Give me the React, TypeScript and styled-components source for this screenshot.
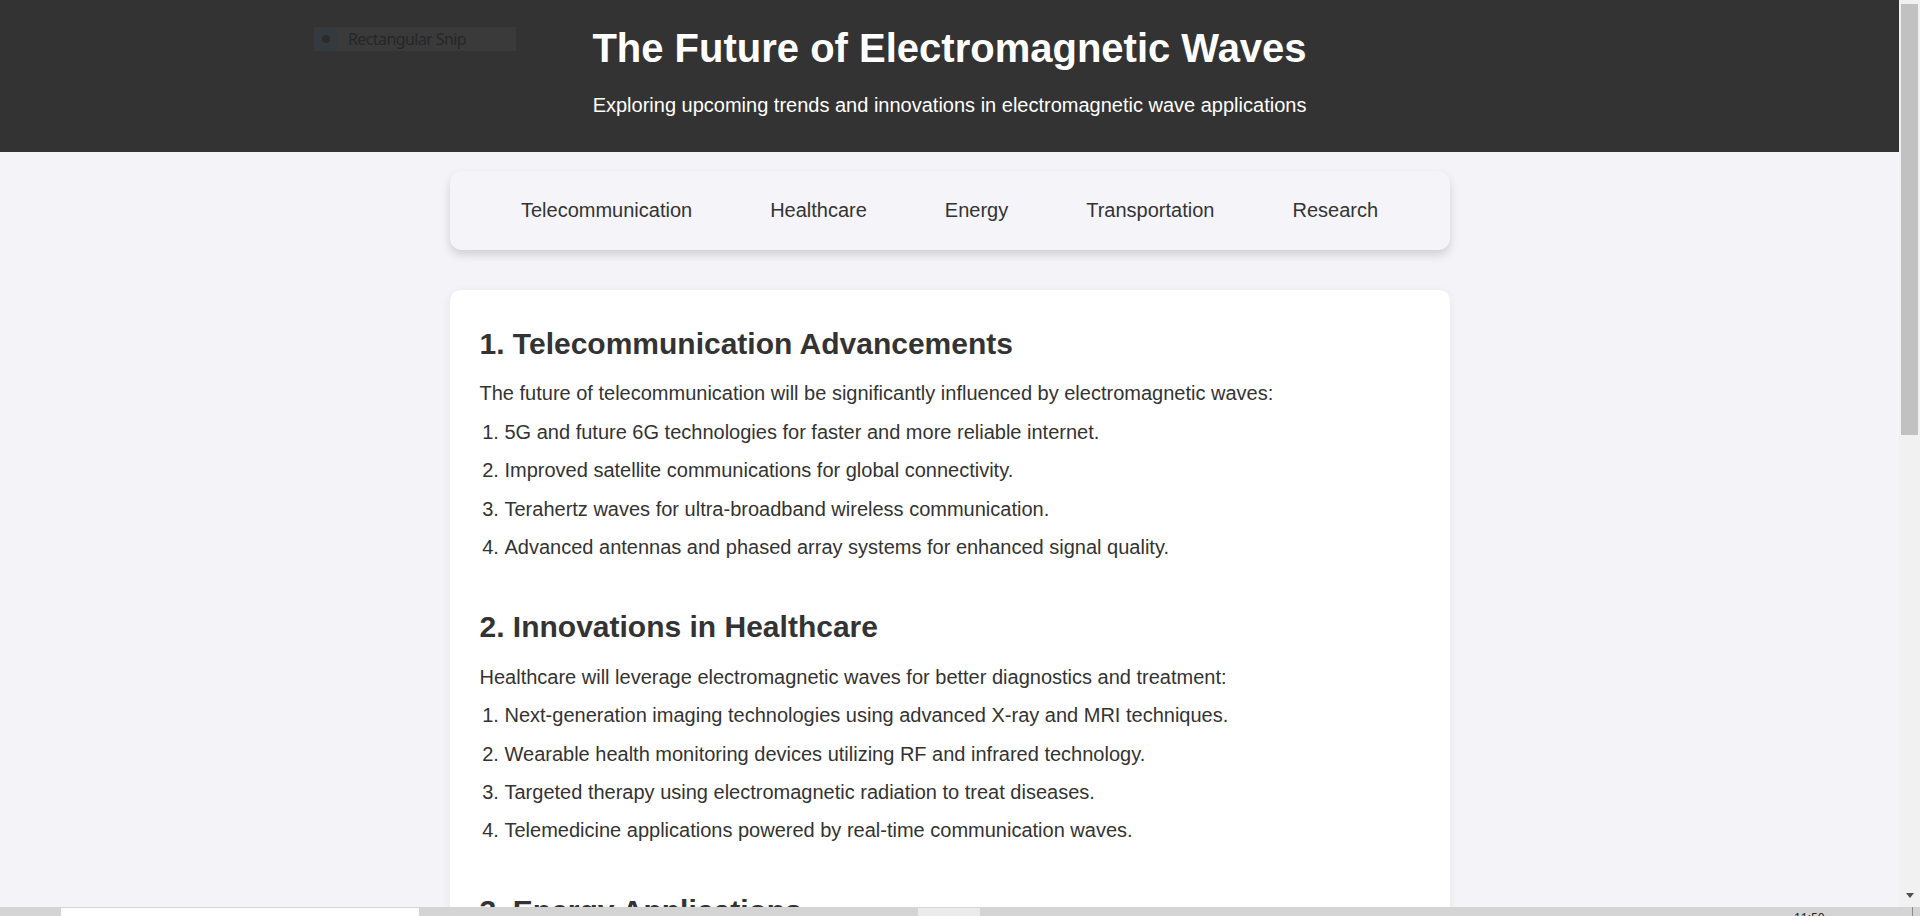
import React from "react";
import styled, { createGlobalStyle } from "styled-components";

const GlobalStyle = createGlobalStyle`
  html, body {
    margin: 0;
    padding: 0;
  }
  body {
    font-family: "Liberation Sans", Arial, sans-serif;
    background: #f3f3f8;
    overflow: hidden;
  }
`;

const Frame = styled.div`
  width: 1920px;
  height: 916px;
  display: flex;
  flex-direction: column;
  overflow: hidden;
`;

const Screen = styled.div`
  display: flex;
  height: 907px;
  flex: none;
`;

const Viewport = styled.div`
  flex: 1;
  min-width: 0;
  overflow: hidden;
  position: relative;
  background: #f3f3f8;
  color: #333;
  line-height: 1.6;
`;

const Scrollbar = styled.div`
  width: 21px;
  flex: none;
  background: #f1f1f1;
  display: flex;
  flex-direction: column;
  align-items: center;
  padding-top: 4px;
  box-sizing: border-box;
`;

const Thumb = styled.div`
  width: 17px;
  height: 431px;
  background: #c1c1c1;
`;

const ScrollArrow = styled.div`
  margin-top: auto;
  margin-bottom: 9px;
  width: 0;
  height: 0;
  border-left: 4.5px solid transparent;
  border-right: 4.5px solid transparent;
  border-top: 5px solid #505050;
`;

const Header = styled.header`
  background: #333;
  color: #fff;
  text-align: center;
  padding: 25px 20px 34.7px;
`;

const Title = styled.h1`
  margin: 0;
  font-size: 40px;
  line-height: 46px;
  font-weight: 700;
`;

const Subtitle = styled.p`
  margin: 23.3px 0 0;
  font-size: 20px;
  line-height: 23px;
`;

const Nav = styled.nav`
  max-width: 1000px;
  margin: 19px auto 40px;
  background: #f5f5f9;
  border-radius: 12px;
  box-shadow: 0 5px 10px rgba(0, 0, 0, 0.14);
  display: flex;
  justify-content: center;
  gap: 78px;
  padding: 23.5px 0;
`;

const NavLink = styled.a`
  font-size: 20px;
  line-height: 32px;
  color: #333;
  text-decoration: none;
`;

const Card = styled.main`
  max-width: 1000px;
  margin: 0 auto;
  background: #fff;
  border-radius: 10px;
  padding: 30px;
  box-sizing: border-box;
  box-shadow: 0 2px 10px rgba(0, 0, 0, 0.06);
`;

const Section = styled.section`
  margin-bottom: 40.5px;
`;

const SectionTitle = styled.h2`
  margin: 0 0 9.5px;
  font-size: 30px;
  line-height: 48px;
  font-weight: 700;
  color: #333;
`;

const Para = styled.p`
  margin: 0 0 6.3px;
  font-size: 20px;
  line-height: 32px;
`;

const List = styled.ol`
  margin: 0;
  padding-left: 25px;
`;

const Item = styled.li`
  font-size: 20px;
  line-height: 32px;
  margin-bottom: 6.4px;
`;

const Snip = styled.div`
  position: absolute;
  left: 314px;
  top: 27px;
  width: 202px;
  height: 24px;
  background: #3a3a3b;
  display: flex;
  align-items: center;
`;

const SnipIcon = styled.div`
  width: 24px;
  height: 24px;
  background: #353a3e;
  display: flex;
  align-items: center;
  justify-content: center;
`;

const SnipDot = styled.div`
  width: 8px;
  height: 8px;
  border-radius: 50%;
  background: #2b2b2b;
`;

const SnipLabel = styled.span`
  margin-left: 10px;
  font-family: "Noto Sans", "Open Sans", sans-serif;
  font-size: 16px;
  letter-spacing: -0.6px;
  line-height: 24px;
  color: #262626;
`;

const Taskbar = styled.div`
  height: 9px;
  flex: none;
  background: #d4d4d4;
  display: flex;
  align-items: flex-start;
  overflow: hidden;
`;

const TaskSlot = styled.div<{ $offset: number; $width: number; $tone: string }>`
  margin-left: ${(p) => p.$offset}px;
  width: ${(p) => p.$width}px;
  height: 9px;
  margin-top: 1px;
  background: ${(p) => p.$tone};
`;

const Clock = styled.span`
  margin-left: 814px;
  font-family: "Noto Sans", sans-serif;
  font-size: 12px;
  line-height: 12px;
  padding-top: 5px;
  color: #222;
`;

const TaskLine = styled.div`
  margin-left: auto;
  margin-right: 7px;
  width: 1px;
  height: 9px;
  background: #8a8a8a;
`;

type SectionData = {
  title: string;
  intro: string;
  items: string[];
};

const sections: SectionData[] = [
  {
    title: "1. Telecommunication Advancements",
    intro:
      "The future of telecommunication will be significantly influenced by electromagnetic waves:",
    items: [
      "5G and future 6G technologies for faster and more reliable internet.",
      "Improved satellite communications for global connectivity.",
      "Terahertz waves for ultra-broadband wireless communication.",
      "Advanced antennas and phased array systems for enhanced signal quality.",
    ],
  },
  {
    title: "2. Innovations in Healthcare",
    intro:
      "Healthcare will leverage electromagnetic waves for better diagnostics and treatment:",
    items: [
      "Next-generation imaging technologies using advanced X-ray and MRI techniques.",
      "Wearable health monitoring devices utilizing RF and infrared technology.",
      "Targeted therapy using electromagnetic radiation to treat diseases.",
      "Telemedicine applications powered by real-time communication waves.",
    ],
  },
  {
    title: "3. Energy Applications",
    intro:
      "Electromagnetic waves will play a key role in how energy is produced and delivered:",
    items: [
      "Wireless power transfer for electric vehicles and consumer devices.",
      "Space-based solar power beamed to Earth using microwaves.",
      "Smart grids relying on wireless sensing and communication.",
      "Improved photovoltaic materials harvesting a wider light spectrum.",
    ],
  },
  {
    title: "4. Transportation",
    intro: "Transportation systems will become safer and smarter:",
    items: [
      "Radar and LiDAR for autonomous vehicles.",
      "Vehicle-to-everything (V2X) communication networks.",
      "Satellite navigation with centimeter-level precision.",
      "Wireless charging lanes for electric roads.",
    ],
  },
  {
    title: "5. Research Frontiers",
    intro: "Ongoing research continues to open new possibilities:",
    items: [
      "Metamaterials for controlling wave propagation.",
      "Quantum communication using photons.",
      "Gravitational and electromagnetic multi-messenger astronomy.",
      "Novel sensors for environmental monitoring.",
    ],
  },
];

const navItems = [
  { label: "Telecommunication", href: "#telecommunication" },
  { label: "Healthcare", href: "#healthcare" },
  { label: "Energy", href: "#energy" },
  { label: "Transportation", href: "#transportation" },
  { label: "Research", href: "#research" },
];

export default function App() {
  return (
    <Frame>
      <GlobalStyle />
      <Screen>
        <Viewport>
          <Header>
            <Title>The Future of Electromagnetic Waves</Title>
            <Subtitle>
              Exploring upcoming trends and innovations in electromagnetic wave applications
            </Subtitle>
          </Header>
          <Nav>
            {navItems.map((n) => (
              <NavLink key={n.label} href={n.href}>
                {n.label}
              </NavLink>
            ))}
          </Nav>
          <Card>
            {sections.map((s) => (
              <Section key={s.title}>
                <SectionTitle>{s.title}</SectionTitle>
                <Para>{s.intro}</Para>
                <List>
                  {s.items.map((it) => (
                    <Item key={it}>{it}</Item>
                  ))}
                </List>
              </Section>
            ))}
          </Card>
          <Snip>
            <SnipIcon>
              <SnipDot />
            </SnipIcon>
            <SnipLabel>Rectangular Snip</SnipLabel>
          </Snip>
        </Viewport>
        <Scrollbar>
          <Thumb />
          <ScrollArrow />
        </Scrollbar>
      </Screen>
      <Taskbar>
        <TaskSlot $offset={61} $width={358} $tone="#ffffff" />
        <TaskSlot $offset={499} $width={62} $tone="#ebebeb" />
        <Clock>11:50</Clock>
        <TaskLine />
      </Taskbar>
    </Frame>
  );
}
